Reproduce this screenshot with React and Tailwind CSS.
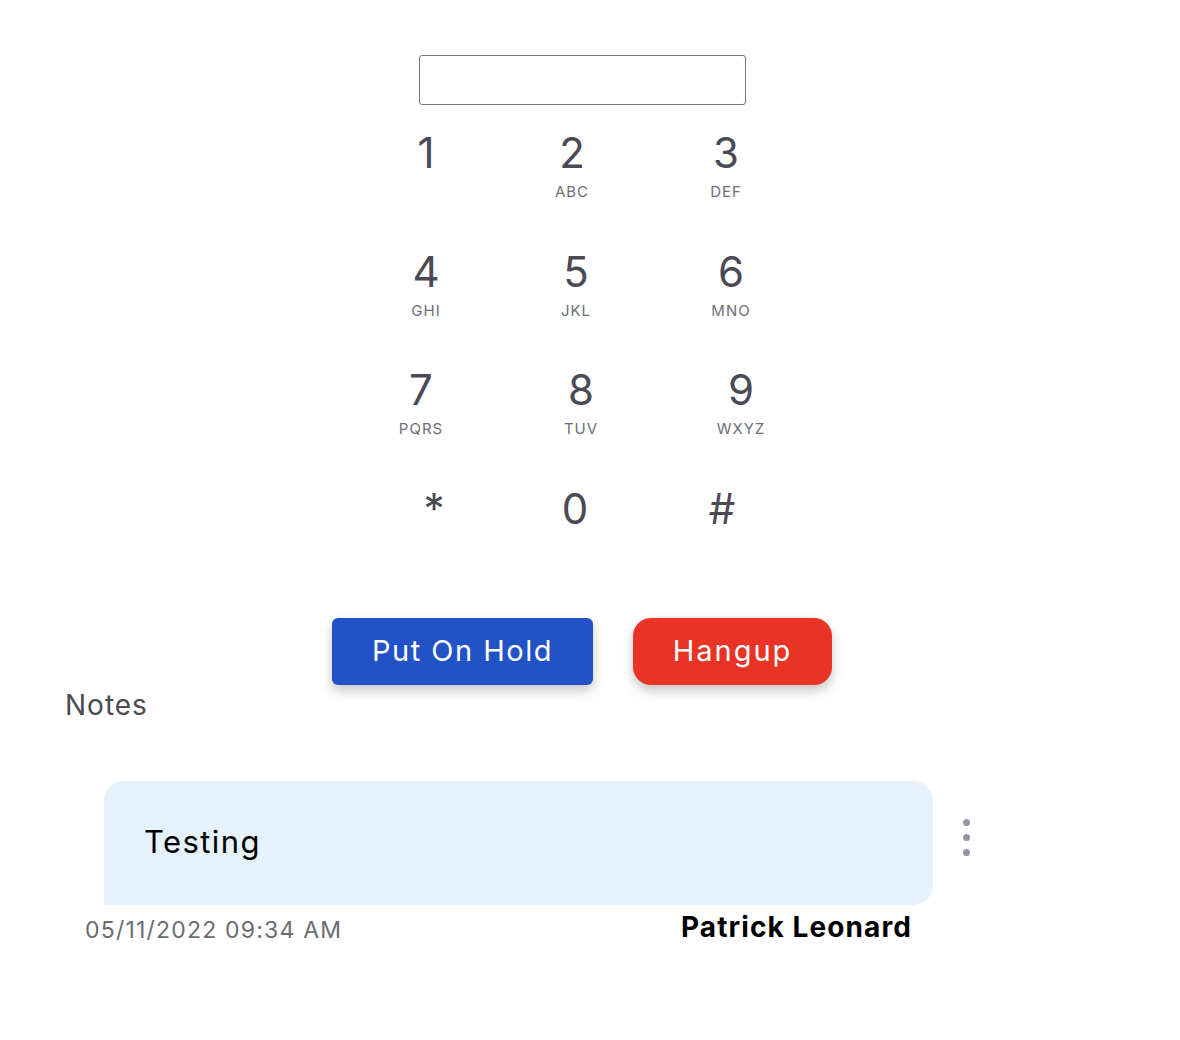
import { useState } from 'react';

// keypad rows: [digit, letters, left margin]
const rows = [
  [
    ['1', '', 'ml-[386px]'],
    ['2', 'ABC', 'ml-[66px]'],
    ['3', 'DEF', 'ml-[74px]'],
  ],
  [
    ['4', 'GHI', 'ml-[386px]'],
    ['5', 'JKL', 'ml-[70px]'],
    ['6', 'MNO', 'ml-[75px]'],
  ],
  [
    ['7', 'PQRS', 'ml-[381px]'],
    ['8', 'TUV', 'ml-[80px]'],
    ['9', 'WXYZ', 'ml-[80px]'],
  ],
  [
    ['*', '', 'ml-[394px]'],
    ['0', '', 'ml-[61px]'],
    ['#', '', 'ml-[67px]'],
  ],
];

function Key({ digit, letters, offset, onPress }) {
  return (
    <button
      onClick={() => onPress(digit)}
      className={`${offset} w-[80px] h-[70px] flex flex-col items-center shrink-0`}
    >
      <span className="text-[42px] leading-[42px] text-[#4a4a55]">{digit}</span>
      <span className="mt-[8px] text-[15px] leading-[20px] text-[#6e6e78] tracking-[1px]">{letters}</span>
    </button>
  );
}

export default function App() {
  const [number, setNumber] = useState('');

  return (
    <div className="w-[1180px] min-h-[1040px] bg-white font-['Inter',sans-serif]">
      <div className="w-[1164px] pt-[55px]">
        <input
          value={number}
          onChange={(e) => setNumber(e.target.value)}
          className="block mx-auto w-[327px] h-[50px] border-[1.5px] border-[#777] rounded-[3px] outline-none px-3 text-xl"
        />

        {/* Dial pad */}
        <div className="mt-[27px] flex flex-col gap-[48.5px]">
          {rows.map((row, i) => (
            <div key={i} className="flex">
              {row.map(([d, l, o]) => (
                <Key key={d} digit={d} letters={l} offset={o} onPress={(k) => setNumber(number + k)} />
              ))}
            </div>
          ))}
        </div>

        <div className="mt-[60px] flex justify-center gap-[40px]">
          <button className="w-[261px] h-[67px] rounded-[6px] bg-[#2153c6] text-white text-[29px] tracking-[1.5px] shadow-[0_6px_12px_rgba(0,0,0,0.22)]">
            Put On Hold
          </button>
          <button className="w-[199px] h-[67px] rounded-[18px] bg-[#e83325] text-white text-[29px] tracking-[2px] shadow-[0_6px_12px_rgba(0,0,0,0.22)]">
            Hangup
          </button>
        </div>

        <div className="mt-[1px] pl-[65px] text-[28px] leading-[38px] tracking-[1px] text-[#4a4a55]">Notes</div>

        {/* Note */}
        <div className="mt-[57px] flex items-center">
          <div className="ml-[104px] w-[829px] h-[124px] bg-[#e6f2fb] rounded-[20px] rounded-bl-none flex items-center pl-[40px]">
            <span className="text-[31px] tracking-[1.4px] text-black">Testing</span>
          </div>
          <div className="ml-[30px] flex flex-col gap-[8px] -mt-[10px]">
            <span className="w-[7px] h-[7px] rounded-full bg-[#8f97a6]" />
            <span className="w-[7px] h-[7px] rounded-full bg-[#8f97a6]" />
            <span className="w-[7px] h-[7px] rounded-full bg-[#8f97a6]" />
          </div>
        </div>
        <div className="w-[912px] flex justify-between items-start">
          <span className="ml-[85px] mt-[8px] text-[23px] tracking-[1.2px] text-[#6b6b73]">05/11/2022 09:34 AM</span>
          <span className="mt-[3px] text-[28px] leading-[38px] tracking-[1.1px] font-bold text-black">Patrick Leonard</span>
        </div>
      </div>
    </div>
  );
}
